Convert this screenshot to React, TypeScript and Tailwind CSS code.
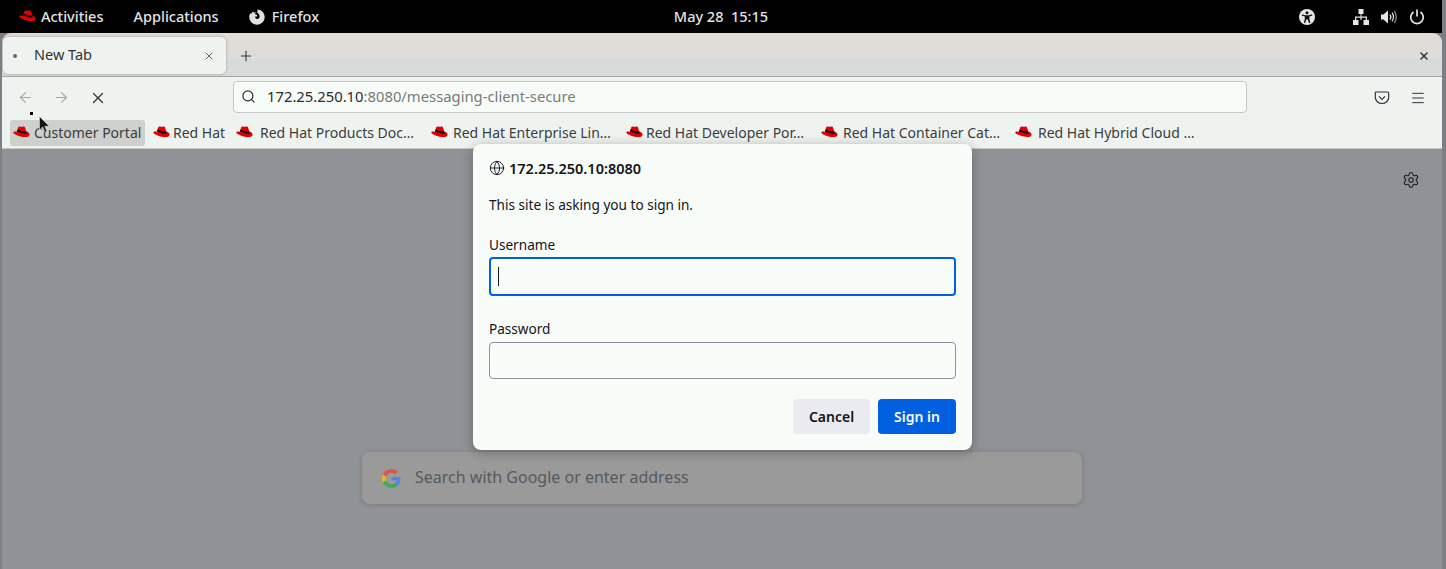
import { ArrowLeft, ArrowRight, Globe, Menu, Plus, Search, Settings, X } from "lucide-react";

const bookmarks = [
  { label: "Red Hat", width: "w-[53px]", gap: "ml-2", textGap: "ml-[3px]" },
  { label: "Red Hat Products Doc…", width: "w-[157px]", gap: "ml-[10px]", textGap: "ml-[7px]" },
  { label: "Red Hat Enterprise Lin…", width: "w-[159px]", gap: "ml-[14px]", textGap: "ml-[5px]" },
  { label: "Red Hat Developer Por…", width: "w-[162px]", gap: "ml-[14px]", textGap: "ml-[3px]" },
  { label: "Red Hat Container Cat…", width: "w-[158px]", gap: "ml-[13px]", textGap: "ml-[5px]" },
  { label: "Red Hat Hybrid Cloud …", width: "w-[157px]", gap: "ml-[14px]", textGap: "ml-[6px]" },
];

function RedHatLogo({ className }: { className?: string }) {
  return (
    <svg viewBox="0 0 20 15" className={className}>
      <path
        d="M4.500 6.500 6 2C6.400.7 7.500.2 8.800.6c.9.300 1.800.300 2.700 0 1.300-.4 2.400 0 2.800 1.300l1.300 4.300c2.300.8 4 2 4 3.700 0 2-2.300 3.100-5.200 3C9.500 12.700 .3 9.900.3 7.400.3 6.400 2.200 6 4.500 6.500Z"
        fill="#e00000"
      />
      <path d="M4.700 5.900c3 1.700 7.400 3 10.900 3.100l.6.100-.6-2.800C12 6.300 8 5.300 5.300 4Z" fill="#111" />
    </svg>
  );
}

function FirefoxIcon() {
  return (
    <svg viewBox="0 0 16 16" className="h-4 w-4">
      <path
        d="M8 .4c4.300 0 7.700 3.400 7.700 7.600S12.300 15.700 8 15.700.3 12.300.3 8C.3 6.400.8 5 1.700 3.800c0 .6.200 1.100.5 1.400C2.500 3.800 3.400 2.700 4.600 2.200 4.400 2.800 4.500 3.400 4.800 3.800 5.500 3.200 6.500 3 7.300 3.200 6.700 3.700 6 4.400 5.800 5.100 6.500 5.500 7.300 5.600 8 6 8.400 6.400 8.300 6.900 8 7.200 7.500 7.600 6.700 7.300 6.200 7.500 6 8.600 6.800 9.900 8 10 9.500 10.100 10.600 9 10.600 7.700 10.600 5.900 9.500 4.100 7.700 3.300 8.800 2.600 9.100 1.500 8 .4Z"
        fill="#e0e0e0"
      />
    </svg>
  );
}

function AccessIcon() {
  return (
    <svg viewBox="0 0 16 16" className="h-4 w-4">
      <circle cx="8" cy="8" r="8" fill="#e6e6e6" />
      <circle cx="8" cy="3.700" r="1.500" fill="#111" />
      <path d="M3 5.300 6 6.200h4l3-.9.400 1.100-3 1.100v2.400l1 4h-1.300L8.500 10.300h-1L6 13.900H4.800l1-4V7.500l-3-1.100Z" fill="#111" />
    </svg>
  );
}

function NetworkIcon() {
  return (
    <svg viewBox="0 0 16 16" className="h-4 w-4" fill="#e6e6e6">
      <path d="M5.500 0h5v5h-2v2.500H14V11h-1.300V8.800H8.600V11H7.400V8.800H3.300V11H2V7.500h5.500V5h-2Z" />
      <path d="M0 11h5.500v5H0ZM10.500 11H16v5h-5.500Z" />
    </svg>
  );
}

function VolumeIcon() {
  return (
    <svg viewBox="0 0 16 16" className="h-4 w-4" fill="none">
      <path d="M0 5.500h2.500L7 1.500v13l-4.500-4H0Z" fill="#e6e6e6" />
      <path d="M9 5.500c1 1.500 1 3.500 0 5" stroke="#e6e6e6" strokeWidth="1.300" />
      <path d="M11 3.700c1.800 2.500 1.800 6 0 8.600" stroke="#e6e6e6" strokeWidth="1.200" />
      <path d="M13.300 2c2.400 3.600 2.400 8.400 0 12" stroke="#9a9a9a" strokeWidth="1.200" />
    </svg>
  );
}

function PowerIcon() {
  return (
    <svg viewBox="0 0 16 16" className="h-4 w-4" fill="none" stroke="#e6e6e6" strokeWidth="1.700">
      <path d="M8 .5v7" />
      <path d="M4.500 3A6.300 6.300 0 1 0 11.500 3" />
    </svg>
  );
}

function PocketIcon() {
  return (
    <svg viewBox="0 0 16 16" className="h-4 w-4 text-[#2e3436]" fill="none" stroke="currentColor" strokeWidth="1.200">
      <path d="M2.200 2h11.600c.5 0 .9.400.9.900v4.300c0 3.600-3 6.300-6.700 6.300S1.300 10.800 1.300 7.200V2.900c0-.5.400-.9.900-.9Z" />
      <path d="m5 6.300 3 3 3-3" />
    </svg>
  );
}

function GoogleIcon() {
  return (
    <svg viewBox="0 0 24 24" className="h-[19px] w-[19px] opacity-80">
      <path d="M23.500 12.300c0-.8-.1-1.600-.2-2.300H12v4.500h6.500c-.3 1.500-1.100 2.800-2.400 3.600v3h3.900c2.200-2.100 3.500-5.100 3.500-8.800Z" fill="#4285f4" />
      <path d="M12 24c3.200 0 6-1.100 8-2.900l-3.900-3c-1.100.7-2.500 1.200-4.100 1.200-3.100 0-5.800-2.100-6.700-5H1.200v3.100C3.200 21.300 7.300 24 12 24Z" fill="#34a853" />
      <path d="M5.300 14.300c-.5-1.500-.5-3.100 0-4.600V6.600H1.200c-1.600 3.300-1.600 7.500 0 10.800Z" fill="#fbbc05" />
      <path d="M12 4.800c1.800 0 3.300.6 4.600 1.800l3.400-3.400C17.900 1.200 15.200 0 12 0 7.300 0 3.200 2.700 1.200 6.600l4.100 3.100c.9-2.800 3.600-4.900 6.700-4.900Z" fill="#ea4335" />
    </svg>
  );
}

export default function App() {
  return (
    <div className="relative flex h-[569px] w-[1446px] flex-col overflow-hidden bg-[#7d7f82] pl-[2px] pr-[4px] font-['Noto_Sans',sans-serif] text-[14px] text-[#2e3436]">
      {/* gnome top bar */}
      <div className="-ml-[2px] grid h-[33px] shrink-0 grid-cols-3 items-center bg-black text-[14.5px] font-medium text-[#e3e3e3]">
        <div className="flex items-center pl-[19px]">
          <RedHatLogo className="h-[13px] w-[17px]" />
          <span className="ml-[5px]">Activities</span>
          <span className="ml-[30px]">Applications</span>
          <span className="ml-[30px] mr-[7px]">
            <FirefoxIcon />
          </span>
          <span>Firefox</span>
        </div>
        <div className="text-center">May 28&nbsp;&nbsp;15:15</div>
        <div className="flex items-center justify-end gap-[12px] pr-[17px]">
          <span className="mr-[26px]">
            <AccessIcon />
          </span>
          <NetworkIcon />
          <VolumeIcon />
          <PowerIcon />
        </div>
      </div>

      {/* tab strip */}
      <div className="flex h-[44px] shrink-0 items-center rounded-t-[9px] border-b border-[#a5a49f] bg-[linear-gradient(#e0dcd8_0,#e0dcd8_57%,#d8dbd9_58%)] pl-px pt-[2px]">
        <div className="flex h-[37px] w-[223px] items-center rounded-[5px] bg-[#eff3f0] pl-[10px] pr-[11px] text-[14.5px] shadow-[0_0_3px_rgba(0,0,0,0.3)]">
          <span className="h-[4px] w-[4px] rounded-full bg-[#666]" />
          <span className="ml-[17px] flex-1 -translate-y-px">New Tab</span>
          <X className="h-[12px] w-[12px]" strokeWidth={1.5} />
        </div>
        <Plus className="ml-[12px] h-[16px] w-[16px]" strokeWidth={1.6} />
        <X className="ml-auto mr-[12px] h-[12px] w-[12px]" strokeWidth={3} />
      </div>

      {/* nav toolbar */}
      <div className="flex h-[41px] shrink-0 items-center bg-[#eff3f0]">
        <ArrowLeft className="ml-[15px] h-[17px] w-[17px] text-[#a4a7a7]" strokeWidth={1.5} />
        <ArrowRight className="ml-[19px] h-[17px] w-[17px] text-[#a4a7a7]" strokeWidth={1.5} />
        <X className="ml-[19px] h-[18px] w-[18px]" strokeWidth={1.6} />
        <div className="mb-[2px] ml-[126px] flex h-[32px] w-[1014px] items-center rounded-[4px] border border-[#c8c9c5] bg-[#f8fcf9] pl-[7px] text-[14.8px]">
          <Search className="h-[15px] w-[15px]" strokeWidth={2} />
          <span className="ml-[11px] text-[#2b2b2b]">172.25.250.10</span>
          <span className="text-[#777b7a]">:8080/messaging-client-secure</span>
        </div>
        <span className="ml-[127px]">
          <PocketIcon />
        </span>
        <Menu className="ml-[20px] h-[16px] w-[16px]" strokeWidth={1.5} />
      </div>

      {/* bookmarks */}
      <div className="flex h-[31px] shrink-0 items-start whitespace-nowrap border-b border-[#c8c6c0] bg-[#eff3f0] pl-[8px] text-[#3a3d3e]">
        <div className="mt-[2px] flex h-[26px] w-[135px] items-center rounded-[3px] bg-[#cdd0cd] pl-[3px]">
          <RedHatLogo className="h-[13px] w-[17px] shrink-0 -translate-y-px" />
          <span className="ml-[4px] -translate-y-px">Customer Portal</span>
        </div>
        {bookmarks.map((b) => (
          <div key={b.label} className={`mt-[2px] flex h-[26px] items-center ${b.gap}`}>
            <RedHatLogo className="h-[13px] w-[17px] shrink-0 -translate-y-px" />
            <span className={`-translate-y-px ${b.textGap} ${b.width}`}>{b.label}</span>
          </div>
        ))}
      </div>

      {/* new tab page, dimmed by the prompt */}
      <div className="relative flex flex-1 flex-col items-center bg-[#8f9296]">
        <Settings className="absolute right-[22px] top-[22px] h-[18px] w-[18px] text-[#222]" strokeWidth={1.5} />
        <div className="mt-[303px] flex h-[52px] w-[720px] items-center rounded-[8px] bg-[#9a9a9a] pl-[20px] text-[16px] text-[#57595c] shadow-[0_1px_4px_rgba(60,40,50,0.25)]">
          <GoogleIcon />
          <span className="ml-[14px] -translate-y-px">Search with Google or enter address</span>
        </div>

        {/* auth dialog */}
        <div className="absolute left-[471px] top-[-5px] flex h-[306px] w-[499px] flex-col rounded-[8px] bg-[#f8fcf9] px-[16px] text-[13.6px] text-[#15141a] shadow-[0_2px_12px_rgba(0,0,0,0.3)]">
          <div className="mt-[14px] flex items-center text-[14.5px] font-semibold leading-5">
            <Globe className="h-[16px] w-[16px]" strokeWidth={1.4} />
            <span className="ml-[4px]">172.25.250.10:8080</span>
          </div>
          <p className="mt-[17px] leading-5">This site is asking you to sign in.</p>
          <label className="mt-[20px] leading-5">Username</label>
          <div className="mt-[2px] flex h-[39px] items-center rounded-[4px] border-2 border-[#0060df] pl-[7px]">
            <span className="h-[19px] w-px bg-[#15141a]" />
          </div>
          <label className="mt-[23px] leading-5">Password</label>
          <div className="mt-[3px] h-[37px] rounded-[4px] border border-[#8f8f9d]" />
          <div className="mt-[20px] flex justify-end gap-[8px] text-[14px] font-semibold">
            <button className="h-[35px] w-[77px] rounded-[4px] bg-[#e9ebf0] text-[#15141a]">Cancel</button>
            <button className="h-[35px] w-[78px] rounded-[4px] bg-[#0060df] text-[#f8fcf9]">Sign in</button>
          </div>
        </div>
      </div>

      {/* mouse pointer, with the stray pixel block beside it */}
      <span className="absolute left-[30px] top-[112px] h-[3px] w-[3px] bg-black" />
      <svg viewBox="0 0 12 18" className="absolute left-[39px] top-[116px] h-[18px] w-[12px]">
        <path d="M.5.500v13.500l3.200-3 2.300 5.300 2-.9-2.200-5.100h4.400Z" fill="#111" stroke="#ddd" strokeWidth=".6" />
      </svg>
    </div>
  );
}
